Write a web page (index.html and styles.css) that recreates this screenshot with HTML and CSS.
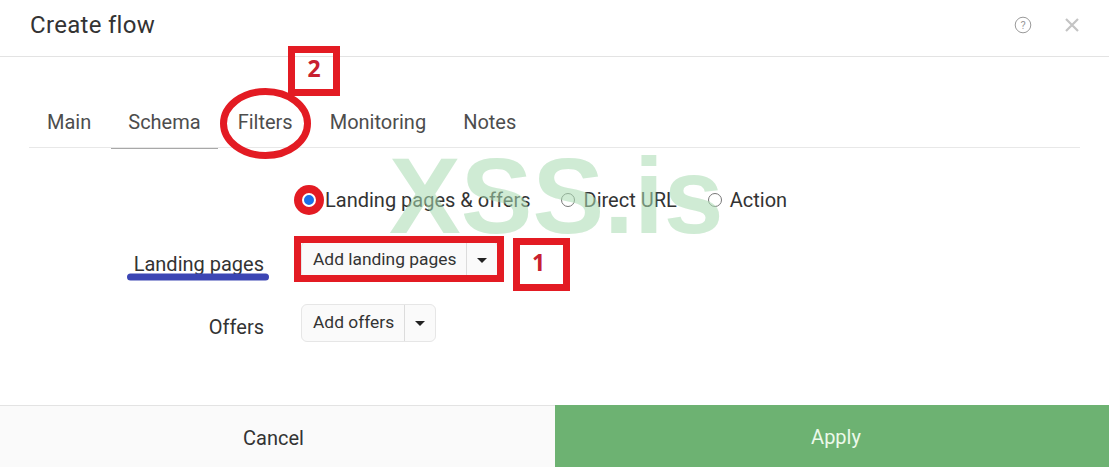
FILE: index.html
```html
<!DOCTYPE html>
<html lang="en">
<head>
<meta charset="utf-8">
<title>Create flow</title>
<link rel="stylesheet" href="styles.css">
</head>
<body>
<div class="modal">
  <header class="head">
    <h1 class="title">Create flow</h1>
    <div class="head-icons">
      <svg class="ico-help" width="18" height="18" viewBox="0 0 18 18"><circle cx="9" cy="9" r="7.8" fill="none" stroke="#9a9a9a" stroke-width="1"/><text x="9" y="13" text-anchor="middle" class="help-q">?</text></svg>
      <svg class="ico-close" width="14" height="14" viewBox="0 0 14 14"><path d="M1 1L13 13M13 1L1 13" stroke="#c4c4c4" stroke-width="2.2" fill="none"/></svg>
    </div>
  </header>
  <main class="body">
    <nav class="tabs">
      <span class="tab">Main</span>
      <span class="tab tab-active">Schema</span>
      <span class="tab">Filters</span>
      <span class="tab">Monitoring</span>
      <span class="tab">Notes</span>
    </nav>
    <div class="radios">
      <label class="radio radio-on"><span class="dot"></span>Landing pages &amp; offers</label>
      <label class="radio radio-mid"><span class="dot"></span>Direct URL</label>
      <label class="radio radio-last"><span class="dot"></span>Action</label>
    </div>
    <div class="row row-first">
      <span class="label">Landing pages</span>
      <div class="split"><span class="split-main">Add landing pages</span><span class="split-caret"><i class="caret"></i></span></div>
    </div>
    <div class="row">
      <span class="label">Offers</span>
      <div class="split"><span class="split-main">Add offers</span><span class="split-caret"><i class="caret"></i></span></div>
    </div>
  </main>
  <footer class="foot">
    <button class="btn btn-cancel">Cancel</button>
    <button class="btn btn-apply">Apply</button>
  </footer>

  <div class="watermark">XSS.is</div>
  <svg class="marks" width="1109" height="467" viewBox="0 0 1109 467">
    <ellipse cx="265.500" cy="123.500" rx="42" ry="32" fill="none" stroke="#e31b23" stroke-width="7"/>
    <path d="M130.500 277H265.500" stroke="#3c46b4" stroke-width="7" stroke-linecap="round"/>
  </svg>
  <div class="mark mark-two">2</div>
  <div class="mark mark-one">1</div>
  <div class="mark-box"></div>
</div>
</body>
</html>
```
FILE: styles.css
```css
* { box-sizing: border-box; }
html, body { margin: 0; padding: 0; }
body { width: 1109px; height: 467px; overflow: hidden; background: #fff; font-family: Roboto, "Liberation Sans", sans-serif; color: #333; }
.modal { position: relative; width: 1109px; height: 467px; display: flex; flex-direction: column; }

.head { height: 57px; flex: none; display: flex; align-items: center; justify-content: space-between; padding: 0 30px 7px 30px; border-bottom: 1px solid #e3e3e3; }
.title { margin: 0; font-size: 24px; font-weight: 400; color: #333; letter-spacing: 0.3px; }
.head-icons { display: flex; align-items: center; gap: 33px; }
.help-q { font-size: 11px; fill: #9a9a9a; font-family: Roboto, sans-serif; }

.body { flex: 1; padding: 0 29px; }
.tabs { display: flex; height: 56px; margin-top: 35px; align-items: center; border-bottom: 1px solid #e8e8e8; }
.tab { position: relative; padding: 4px 18.500px 0; font-size: 20px; color: #4d4d4d; line-height: 52px; }
.tab:first-child { padding-left: 18px; }
.tab-active::after { content: ""; position: absolute; left: 1px; right: 1px; bottom: -1px; height: 1px; background: #a8a8a8; }

.radios { display: flex; margin-top: 37px; padding-left: 273px; height: 30px; align-items: center; font-size: 20px; color: #333; }
.radio { display: flex; align-items: center; margin-right: 32px; }
.dot { width: 14px; height: 14px; border: 1px solid #777; border-radius: 50%; background: #fff; margin-right: 9px; }
.radio-on { margin-right: 30px; }
.radio-on .dot { background: #1a6fe8; border: 2px solid #fff; box-shadow: 0 0 0 8px #e31b23; }
.radio-mid { margin-right: 31px; }
.radio-last .dot { margin-right: 8px; }

.row { display: flex; align-items: center; height: 38px; margin-top: 25px; }
.row-first { margin-top: 26px; }
.label { width: 235px; text-align: right; font-size: 20px; color: #333; padding-top: 8px; }
.split { margin-left: 37px; display: inline-flex; height: 38px; border: 1px solid #e6e6e6; border-radius: 6px; background: #fafafa; font-size: 17.400px; color: #333; }
.split-main { padding: 0 10px 0 11px; line-height: 34px; border-right: 1px solid #dcdcdc; }
.split-caret { width: 30px; display: flex; align-items: center; justify-content: center; }
.caret { width: 0; height: 0; border-left: 5px solid transparent; border-right: 5px solid transparent; border-top: 5px solid #222; }

.foot { flex: none; height: 62px; display: flex; }
.btn { border: 0; font: inherit; font-size: 20px; padding: 2px 0 0; }
.btn-cancel { width: 555px; background: #fafafa; border-top: 1px solid #e3e3e3; color: #333; padding-right: 8px; }
.btn-apply { flex: 1; background: #6db272; color: #ecf9ea; padding-left: 8px; }

.watermark { position: absolute; left: 389px; top: 134px; font-family: "Liberation Sans", sans-serif; font-weight: 700; font-size: 107.500px; line-height: 124px; color: #a9dcb2; opacity: .55; white-space: nowrap; }
.marks { position: absolute; left: 0; top: 0; }
.mark { position: absolute; display: flex; align-items: center; justify-content: center; border: 7px solid #e31b23; color: #c8202f; font-family: "Open Sans", sans-serif; font-weight: 700; font-size: 23px; }
.mark-two { left: 288px; top: 46px; width: 52px; height: 50px; padding-bottom: 6px; }
.mark-one { left: 513px; top: 238px; width: 57px; height: 53px; padding: 0 6px 6px 0; }
.mark-box { position: absolute; left: 294px; top: 236px; width: 210px; height: 46px; border: 7px solid #e31b23; }
```
